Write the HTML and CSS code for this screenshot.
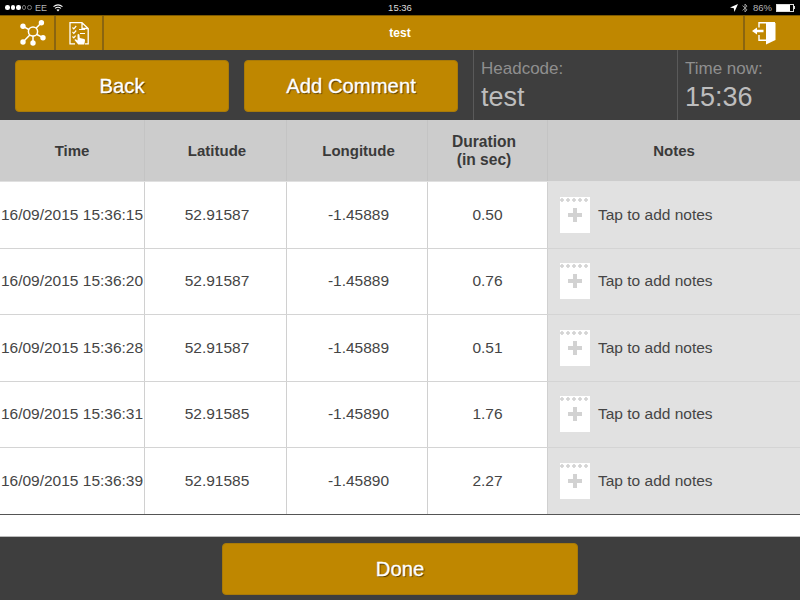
FILE: index.html
```html
<!DOCTYPE html>
<html lang="en">
<head>
<meta charset="utf-8">
<title>test</title>
<link rel="stylesheet" href="styles.css">
</head>
<body>
<div class="app">
  <div class="status">
    <div class="status-left">
      <span class="dots"><i class="dot"></i><i class="dot"></i><i class="dot"></i><i class="dot off"></i><i class="dot off"></i></span>
      <span class="carrier">EE</span>
      <svg class="wifi" width="10" height="8" viewBox="0 0 10 8"><path d="M0.500 2.600 Q5 -0.800 9.500 2.600 M2 4.400 Q5 2 8 4.400" fill="none" stroke="#fff" stroke-width="1.100"/><path d="M3.400 5.700 Q5 4.700 6.600 5.700 L5 7.600Z" fill="#fff"/></svg>
    </div>
    <div class="status-time">15:36</div>
    <div class="status-right">
      <svg width="8" height="8" viewBox="0 0 8 8"><path d="M8 0 L0 3.600 L3.800 4.200 L4.400 8Z" fill="#fff"/></svg>
      <svg width="6" height="10" viewBox="0 0 6 10"><path d="M0.500 2.600 L5 6.800 L3 9 V1 L5 3.200 L0.500 7.400" fill="none" stroke="#999" stroke-width="1"/></svg>
      <span class="pct">86%</span>
      <span class="battery"><span class="battery-fill"></span></span><span class="battery-tip"></span>
    </div>
  </div>

  <div class="topbar">
    <div class="tb-btn tb-first">
      <svg width="26" height="26" viewBox="0 0 26 26">
        <g stroke="#fff" stroke-width="1.500" fill="none"><circle cx="13" cy="11.500" r="4.600"/><path d="M3 6.300 L8.800 9.500M21.400 2.700 L16.200 8M3 22 L9.800 15M13 23 V16M23 17.700 L16.800 14.500"/></g>
        <g fill="#fff"><circle cx="3" cy="6.300" r="2.700"/><circle cx="21.400" cy="2.700" r="2.700"/><circle cx="3" cy="22" r="2.700"/><circle cx="13" cy="23" r="2.700"/><circle cx="23" cy="17.700" r="2.700"/></g>
      </svg>
    </div>
    <div class="tb-btn tb-second">
      <svg width="20" height="23" viewBox="0 0 20 23">
        <path d="M13 .700 H1 V21.800 H6 M16 21.800 H19.200 V6.500 L13 .700 V6.500 H19.200" fill="none" stroke="#fff" stroke-width="1.300"/>
        <path d="M3.500 5.500 l1.300 1.300 l2.400 -2.800 M3.500 10 l1.300 1.300 l2.400 -2.800 M3.500 14.500 l1.300 1.300 l1.800 -2.200 M10 7.500 H16 M11 11.500 H16" fill="none" stroke="#fff" stroke-width="1.200"/>
        <path d="M8.500 12.500 q1 -1 1.900 0 l.4 3.500 l4.400 1 q1 .4 .8 1.700 l-.7 3.800 h-6 l-3.800 -4.500 q.2 -1.200 1.600 -.5 l1.500 1Z" fill="#fff"/>
      </svg>
    </div>
    <div class="tb-title">test</div>
    <div class="tb-btn tb-exit">
      <svg width="26" height="26" viewBox="0 0 26 26">
        <path d="M8 7.500 V2.700 H24 M8 15 V20.300 H15" fill="none" stroke="#fff" stroke-width="1.400"/>
        <path d="M15 3 H24.500 V20 L15 24.500Z" fill="#fff"/>
        <path d="M1 11 L6 7.500 V9.800 H12.500 V12.200 H6 V14.500Z" fill="#fff"/>
      </svg>
    </div>
  </div>

  <div class="toolbar">
    <button class="btn btn-top btn-back">Back</button>
    <button class="btn btn-top btn-comment">Add Comment</button>
    <div class="info info-head">
      <div class="info-label">Headcode:</div>
      <div class="info-value">test</div>
    </div>
    <div class="info info-time">
      <div class="info-label">Time now:</div>
      <div class="info-value">15:36</div>
    </div>
  </div>

  <div class="table">
    <div class="row head">
      <div class="cell">Time</div>
      <div class="cell">Latitude</div>
      <div class="cell">Longitude</div>
      <div class="cell">Duration<br>(in sec)</div>
      <div class="cell">Notes</div>
    </div>
    <div class="row body">
      <div class="cell time">16/09/2015 15:36:15</div><div class="cell">52.91587</div><div class="cell">-1.45889</div><div class="cell">0.50</div>
      <div class="cell notes"><span class="pad"><span class="plus"></span></span>Tap to add notes</div>
    </div>
    <div class="row body">
      <div class="cell time">16/09/2015 15:36:20</div><div class="cell">52.91587</div><div class="cell">-1.45889</div><div class="cell">0.76</div>
      <div class="cell notes"><span class="pad"><span class="plus"></span></span>Tap to add notes</div>
    </div>
    <div class="row body">
      <div class="cell time">16/09/2015 15:36:28</div><div class="cell">52.91587</div><div class="cell">-1.45889</div><div class="cell">0.51</div>
      <div class="cell notes"><span class="pad"><span class="plus"></span></span>Tap to add notes</div>
    </div>
    <div class="row body">
      <div class="cell time">16/09/2015 15:36:31</div><div class="cell">52.91585</div><div class="cell">-1.45890</div><div class="cell">1.76</div>
      <div class="cell notes"><span class="pad"><span class="plus"></span></span>Tap to add notes</div>
    </div>
    <div class="row body last">
      <div class="cell time">16/09/2015 15:36:39</div><div class="cell">52.91585</div><div class="cell">-1.45890</div><div class="cell">2.27</div>
      <div class="cell notes"><span class="pad"><span class="plus"></span></span>Tap to add notes</div>
    </div>
  </div>

  <div class="footer">
    <button class="btn btn-done">Done</button>
  </div>
</div>
</body>
</html>
```
FILE: styles.css
```css
* { box-sizing: border-box; }
html, body { margin: 0; padding: 0; }
body { width: 800px; height: 600px; overflow: hidden; background: #fff; font-family: "Liberation Sans", Arial, sans-serif; color: #3d3d3d; }
.app { width: 800px; height: 600px; display: flex; flex-direction: column; }

.status { height: 15px; flex: none; background: #000; color: #b5b5b5; font-size: 9px; display: flex; align-items: center; justify-content: space-between; }
.status-left { display: flex; align-items: center; gap: 3px; padding-left: 5px; width: 200px; }
.dots { display: flex; gap: 1px; width: 27px; }
.dot { width: 4.600px; height: 4.600px; border-radius: 50%; background: #fff; display: block; flex: none; }
.dot.off { background: transparent; border: 1px solid #777; }
.carrier { font-size: 9px; }
.wifi { margin-left: 3px; }
.status-time { color: #ddd; font-size: 9.500px; }
.status-right { display: flex; align-items: center; justify-content: flex-end; width: 200px; padding-right: 5px; gap: 4px; font-size: 9.500px; }
.pct { margin-left: 1px; }
.battery { width: 18px; height: 8px; border: 1px solid #ddd; display: block; margin-right: -4px; }
.battery-fill { display: block; width: 13px; height: 6px; background: #fff; }
.battery-tip { width: 1px; height: 3px; background: #ddd; display: block; }

.topbar { height: 35px; flex: none; background: #bf8700; border-top: 1px solid #7d5900; display: flex; align-items: stretch; }
.tb-btn { display: flex; align-items: center; justify-content: center; flex: none; }
.tb-first { width: 56px; border-right: 2px solid #8a6510; padding-left: 12px; }
.tb-second { width: 48px; border-right: 2px solid #8a6510; }
.tb-title { flex: 1; color: #fff; font-size: 12px; font-weight: bold; text-align: center; line-height: 34px; padding-right: 47px; }
.tb-exit { width: 57px; border-left: 2px solid #8a6510; justify-content: flex-start; padding-left: 6px; }

.toolbar { height: 70px; flex: none; background: #3e3e3e; display: flex; align-items: stretch; }
.btn { background: #bf8700; color: #fff; border: 1px solid #a97a08; border-radius: 4px; font-family: "Liberation Sans", Arial, sans-serif; font-size: 20.300px; -webkit-text-stroke: 0.300px #fff; text-shadow: 1px 1px 1px #4a3500; padding: 0; }
.btn-top { height: 52px; width: 214px; margin-top: 10px; }
.btn-back { margin-left: 15px; }
.btn-comment { margin-left: 15px; }
.info { border-left: 1px solid #5a5a5a; padding-top: 9px; }
.info-head { width: 204px; margin-left: 15px; padding-left: 7px; }
.info-time { flex: 1; padding-left: 7px; }
.info-label { font-size: 17px; line-height: 19px; color: #8f8f8f; }
.info-value { font-size: 27px; line-height: 32px; margin-top: 3px; color: #bdbdbd; }

.table { height: 416px; flex: none; display: flex; flex-direction: column; }
.row { display: grid; grid-template-columns: 145px 142px 141px 120px 252px; flex: none; }
.cell { display: flex; align-items: center; justify-content: center; text-align: center; border-right: 1px solid #d0d0d0; font-size: 15.500px; color: #454545; }
.cell:last-child { border-right: 0; }
.cell:nth-child(2), .cell:nth-child(3) { padding-left: 3px; }
.head { height: 62px; background: #cccccc; border-bottom: 1px solid #e0e0e0; }
.head .cell { font-weight: bold; font-size: 15px; line-height: 18px; border-right-color: #c4c4c4; color: #3a3a3a; }
.head .cell:nth-child(4) { font-size: 15.600px; padding-right: 7px; }
.body { height: 66.500px; border-bottom: 1px solid #d4d4d4; }
.body.last { border-bottom: 1px solid #555; }
.time { white-space: nowrap; }
.notes { background: #e1e1e1; justify-content: flex-start; padding-left: 12px; gap: 8px; }
.pad { width: 30px; height: 36px; background: radial-gradient(circle, #d4d4d4 1.500px, transparent 2px) -1px 0 / 6px 6px repeat-x #fff; display: flex; align-items: center; justify-content: center; flex: none; }
.plus { width: 14px; height: 14px; display: block; background: linear-gradient(#d2d2d2, #d2d2d2) center / 14px 4px no-repeat, linear-gradient(#d2d2d2, #d2d2d2) center / 4px 14px no-repeat; }

.footer { flex: 1; background: #3e3e3e; border-top: 1px solid #bbb; display: flex; justify-content: center; align-items: flex-start; padding-top: 6px; }
.btn-done { width: 356px; height: 52px; }
```
